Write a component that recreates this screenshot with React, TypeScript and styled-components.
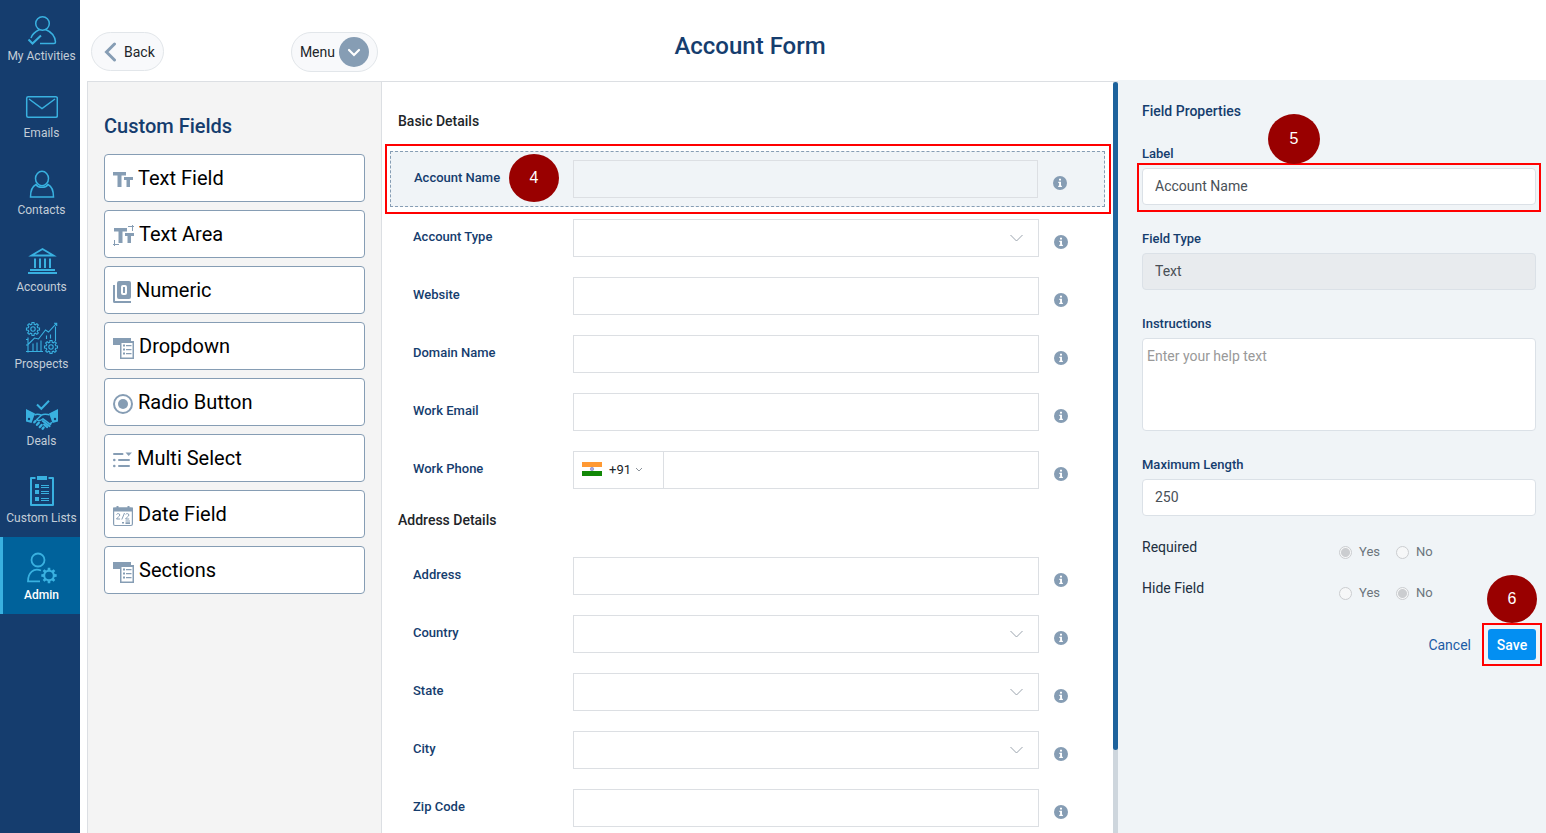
import React from "react";
import styled, { createGlobalStyle, css } from "styled-components";

const color = {
  navy: "#153d6e",
  active: "#00629b",
  cyan: "#39b1e0",
  slate: "#869db4",
  line: "#dcdfe3",
  pane: "#f0f4f7",
  red: "#ff0000",
  maroon: "#990000",
};

const GlobalStyle = createGlobalStyle`
  *, *::before, *::after { box-sizing: border-box; }
  body { margin: 0; overflow: hidden; background: #fff; }
  body, button, input, select, textarea { font-family: Roboto, "Liberation Sans", sans-serif; }
`;

const Page = styled.div`
  display: flex;
  height: 100vh;
  overflow: hidden;
`;

/* ---------- sidebar ---------- */

const Sidebar = styled.nav`
  flex: 0 0 80px;
  background: ${color.navy};
  overflow: hidden;
`;

const NavList = styled.ul`
  list-style: none;
  margin: -2px 0 0;
  padding: 0;
`;

const NavLink = styled.a<{ $active?: boolean }>`
  display: flex;
  flex-direction: column;
  align-items: center;
  justify-content: flex-end;
  gap: 2px;
  height: 77px;
  padding: 0 0 11px 3px;
  font-size: 12px;
  line-height: 16px;
  white-space: nowrap;
  text-decoration: none;
  color: #c3cdd8;
  ${(p) =>
    p.$active &&
    css`
      padding-left: 0;
      border-left: 3px solid ${color.cyan};
      background: ${color.active};
      color: #fff;
      font-weight: 500;
    `}
`;

const NavIcon = styled.svg`
  width: 34px;
  height: 34px;
  margin-right: 1px;
  fill: none;
  stroke: ${color.cyan};
  stroke-width: 1.5;
`;

/* ---------- top bar ---------- */

const Main = styled.div`
  flex: 1;
  min-width: 0;
  display: flex;
  flex-direction: column;
  padding-left: 7px;
`;

const TopBar = styled.header`
  flex: 0 0 81px;
  display: grid;
  grid-template-columns: 295px minmax(0, 1fr) 428px;
`;

const TopActions = styled.div`
  display: flex;
  align-items: flex-start;
  justify-content: space-between;
  padding: 32px 4px 0;
`;

const PillButton = styled.button`
  display: flex;
  align-items: center;
  gap: 6px;
  height: 39px;
  padding: 0 8px 0 12px;
  border: 1px solid #e2e6ea;
  border-radius: 20px;
  background: #f8f9fb;
  color: #212529;
  font-size: 14px;
`;

const MenuButton = styled(PillButton)`
  height: 40px;
  gap: 4px;
  padding: 0 8px;
`;

const Title = styled.h1`
  margin: 32px 0 0;
  text-align: center;
  font-size: 24px;
  line-height: 28px;
  font-weight: 500;
  color: ${color.navy};
`;

const Body = styled.div`
  flex: 1;
  min-height: 0;
  display: grid;
  grid-template-columns: 295px minmax(0, 1fr) 428px;
`;

/* ---------- custom fields ---------- */

const Palette = styled.section`
  border: 1px solid ${color.line};
  border-bottom: 0;
  background: #f4f4f4;
  padding: 32px 16px 0;
`;

const PaletteTitle = styled.h2`
  margin: 0 0 16px;
  font-size: 20px;
  line-height: 24px;
  font-weight: 500;
  color: ${color.navy};
`;

const PaletteList = styled.div`
  display: grid;
  gap: 8px;
`;

const PaletteItem = styled.button`
  display: flex;
  align-items: center;
  gap: 5px;
  height: 48px;
  padding: 0 8px;
  border: 1px solid ${color.slate};
  border-radius: 4px;
  background: #fff;
  color: #000;
  font-size: 20px;
  line-height: 24px;
`;

const PaletteIcon = styled.svg`
  height: 22px;
  margin-top: 4px;
  fill: ${color.slate};
  stroke: none;
`;

/* ---------- form ---------- */

const FormPane = styled.div`
  display: flex;
  min-height: 0;
  border-top: 1px solid ${color.line};
`;

const Form = styled.form`
  flex: 1;
  min-width: 0;
  overflow: hidden;
  padding: 29px 8px 0;
`;

const ScrollTrack = styled.div`
  flex: 0 0 5px;
  background: #ced6dd;
`;

const ScrollThumb = styled.div`
  height: 89%;
  border-radius: 3px;
  background: #1d629c;
`;

const SectionTitle = styled.h3`
  margin: 0 0 0 8px;
  font-size: 14px;
  line-height: 20px;
  font-weight: 500;
  color: #212529;
`;

const Rows = styled.div<{ $top: number }>`
  display: grid;
  gap: 20px;
  margin: ${(p) => p.$top}px 0 21px;
`;

const Row = styled.div<{ $selected?: boolean }>`
  position: relative;
  display: grid;
  grid-template-columns: 160px minmax(0, 1fr) 14px;
  align-items: center;
  padding: 0 37px 0 23px;
  ${(p) =>
    p.$selected &&
    css`
      grid-template-columns: 159px minmax(0, 1fr) 14px;
      margin-bottom: -8px;
      padding: 8px 37px 8px 23px;
      border: 1px dashed ${color.slate};
      background: ${color.pane};
    `}
`;

const RowLabel = styled.label`
  margin-bottom: 2px;
  font-size: 13px;
  line-height: 16px;
  font-weight: 500;
  color: ${color.navy};
`;

const Control = styled.div`
  position: relative;
  display: flex;
  margin-right: 15px;
`;

const controlBox = css`
  width: 100%;
  min-width: 0;
  height: 38px;
  border: 1px solid ${color.line};
  border-radius: 0;
  background: transparent;
  color: #495057;
  font-size: 14px;
  outline: 0;
`;

const RowInput = styled.input`
  ${controlBox}
  padding: 0 12px;
`;

const RowSelect = styled.select`
  ${controlBox}
  appearance: none;
  padding: 0 32px 0 12px;
`;

const SelectArrow = styled.svg`
  position: absolute;
  right: 16px;
  top: 15px;
  width: 13px;
  height: 8px;
  fill: none;
  stroke: #9aa3ad;
  pointer-events: none;
`;

const DialCode = styled.button`
  flex: 0 0 91px;
  display: flex;
  align-items: center;
  height: 38px;
  margin-right: -1px;
  padding: 0 8px 2px;
  border: 1px solid ${color.line};
  background: #fff;
  color: #212529;
  font-size: 13px;

  span {
    margin: 0 4px 0 7px;
  }
`;

const DialArrow = styled.svg`
  width: 8px;
  height: 6px;
  margin-top: 2px;
  fill: none;
  stroke: #8a929a;
`;

const InfoIcon = styled.svg`
  width: 14px;
  height: 14px;
  margin-top: 8px;
`;

/* ---------- properties ---------- */

const Properties = styled.aside`
  margin-top: -1px;
  background: ${color.pane};
  padding: 21px 10px 0 24px;
`;

const PropTitle = styled.h2`
  margin: 0 0 25px;
  font-size: 14px;
  line-height: 20px;
  font-weight: 500;
  color: ${color.navy};
`;

const PropField = styled.div`
  position: relative;
  display: grid;
  gap: 6px;
  margin-bottom: 26px;
`;

const PropLabel = styled.label`
  font-size: 13px;
  line-height: 16px;
  font-weight: 500;
  color: ${color.navy};
`;

const PropInput = styled.input`
  width: 100%;
  height: 37px;
  padding: 0 12px 2px;
  border: 1px solid #dbe1e7;
  border-radius: 4px;
  background: #fff;
  color: #495057;
  font-size: 14px;
  outline: 0;

  &:disabled {
    background: #e8ebee;
  }
`;

const PropTextarea = styled.textarea`
  display: block;
  width: 100%;
  height: 93px;
  padding: 7px 4px;
  border: 1px solid #dbe1e7;
  border-radius: 4px;
  background: #fff;
  color: #495057;
  font-size: 14px;
  line-height: 20px;
  resize: none;
  outline: 0;

  &::placeholder {
    color: #999;
  }
`;

const Choices = styled.div`
  margin-top: -5px;
`;

const Choice = styled.fieldset`
  display: flex;
  align-items: flex-start;
  height: 41px;
  margin: 0;
  padding: 0;
  border: 0;
`;

const ChoiceLegend = styled.span`
  flex: 0 0 197px;
  font-size: 14px;
  line-height: 20px;
  color: #212f40;
`;

const ChoiceOption = styled.label`
  display: flex;
  align-items: center;
  gap: 7px;
  margin-right: 16px;
  padding-top: 6px;
  font-size: 13px;
  line-height: 18px;
  color: #6c757d;

  input {
    appearance: none;
    width: 13px;
    height: 13px;
    margin: 1px 0 0;
    border: 1px solid #cbcdd0;
    border-radius: 50%;
    background: #f6f7f8;
  }

  input:checked {
    background: radial-gradient(circle, #cbcdd0 0 4px, #f6f7f8 5px);
  }
`;

const Actions = styled.div`
  display: flex;
  justify-content: flex-end;
  align-items: center;
  gap: 17px;
  margin-top: 10px;
`;

const CancelButton = styled.button`
  padding: 0;
  border: 0;
  background: none;
  color: #1b5ba5;
  font-size: 14px;
`;

const SaveWrap = styled.div`
  position: relative;
`;

const SaveButton = styled.button`
  display: block;
  width: 48px;
  height: 31px;
  padding: 0;
  border: 0;
  border-radius: 3px;
  background: #038ff2;
  color: #fff;
  font-size: 14px;
  font-weight: 500;
`;

/* ---------- callouts ---------- */

const Frame = styled.div<{ $inset: string }>`
  position: absolute;
  inset: ${(p) => p.$inset};
  border: 2px solid ${color.red};
  pointer-events: none;
`;

const Step = styled.div<{ $left: string; $top: string; $w: number }>`
  position: absolute;
  left: ${(p) => p.$left};
  top: ${(p) => p.$top};
  display: grid;
  place-items: center;
  width: ${(p) => p.$w}px;
  height: ${(p) => p.$w - 2}px;
  border-radius: 50%;
  background: ${color.maroon};
  color: #fff;
  font-family: "Liberation Sans", sans-serif;
  font-size: 16px;
`;

/* ---------- drawings ---------- */

/** Outline of a cog centred on (cx, cy). */
function cog(cx: number, cy: number, outer: number, inner: number, teeth = 8) {
  const pts: string[] = [];
  const step = (Math.PI * 2) / teeth;
  for (let i = 0; i < teeth; i++) {
    const a = i * step;
    [
      [-0.32, inner],
      [-0.2, outer],
      [0.2, outer],
      [0.32, inner],
    ].forEach(([t, r]) => {
      pts.push(`${(cx + Math.cos(a + t * step) * r).toFixed(2)} ${(cy + Math.sin(a + t * step) * r).toFixed(2)}`);
    });
  }
  return `M${pts.join("L")}Z`;
}

const navItems: { label: string; art: React.ReactNode; active?: boolean }[] = [
  {
    label: "My Activities",
    art: (
      <g transform="translate(0 1)">
        <circle cx="18.500" cy="10.500" r="6.800" />
        <path d="M15.500 16.500c-3 1.500-7 3.500-8.500 8.500M21.500 16.500c5 2 9.500 5.500 10 12.500 0 1-.6 1.500-1.500 1.500H16" />
        <path d="M4.500 26.500l4 4L17 22.500" strokeWidth="2" />
      </g>
    ),
  },
  {
    label: "Emails",
    art: (
      <>
        <rect x="2.700" y="7.700" width="30.600" height="20.600" rx="1.500" />
        <path d="M5 10l13 9.500L31 10" />
      </>
    ),
  },
  {
    label: "Contacts",
    art: (
      <>
        <ellipse cx="18" cy="12.500" rx="6.500" ry="7.200" />
        <path d="M12 18.500C8 20.500 6.500 25 6.500 31h23c0-6-1.500-10.500-5.500-12.500-2.500 3.800-9.500 3.800-12 0z" />
      </>
    ),
  },
  {
    label: "Accounts",
    art: (
      <>
        <path d="M7.500 12.500L18.500 6l11 6.500z" strokeWidth="1.800" />
        <path d="M11 15.500v9.500M16 15.500v9.500M21 15.500v9.500M26 15.500v9.500" strokeWidth="2" />
        <path d="M6 27h25M4 30h29" strokeWidth="2" />
      </>
    ),
  },
  {
    label: "Prospects",
    art: (
      <g strokeWidth="1.100" transform="translate(.5 .5)">
        <path d={cog(8.5, 8.5, 6.6, 4.9)} />
        <circle cx="8.500" cy="8.500" r="2.200" />
        <path d={cog(26.5, 26.5, 6.6, 4.9)} />
        <circle cx="26.500" cy="26.500" r="2.200" />
        <path d="M3.500 17v15M1.500 19h2M1.500 24.500h2M1.500 31h17M3.500 24l6.500-6.500 4 1L21 9.500l3 2L32 2.800M29.500 2.800h2.700v2.700" />
        <path d="M8.500 31v-8M12.500 31v-9M16.500 31V20M22 18.500V15M26 18V14M31 20.500V6" />
      </g>
    ),
  },
  {
    label: "Deals",
    art: (
      <>
        <path d="M13 7.500l4.300 4.300L25 3.800" strokeWidth="2" />
        <g fill={color.cyan} stroke="none">
          <path d="M2 12l9 4.600-3.500 9.400L2 24.500zM34 12l-9 4.600 3.500 9.400 5.500-1.500z" />
        </g>
        <g strokeWidth="1.500" strokeLinejoin="round">
          <path d="M10.500 18c2.500-1.500 4.500-1 7 .2l-4.800 4.300c1.800 1.800 4.300 1 6.300-.7l8 6M17.500 18.200c2.500-1.800 4.500-1 8-.4M27.500 25l-1 2.500" />
        </g>
        <path
          d="M10.300 25.300l1.200-1.300M13 27.800l1.800-2M15.800 30l1.800-2M18.600 31.700l1-1.200"
          strokeWidth="2.400"
          strokeLinecap="round"
        />
        <path d="M18.800 24l6.800 5.200M20 27.500l3.200 2.600" strokeWidth="2" strokeLinecap="round" />
        <circle cx="5" cy="22" r="1.200" fill={color.navy} stroke="none" />
        <circle cx="31" cy="22" r="1.200" fill={color.navy} stroke="none" />
      </>
    ),
  },
  {
    label: "Custom Lists",
    art: (
      <g transform="translate(0 -1)">
        <path d="M11.500 5H7v27h22V5h-4.500" strokeWidth="2" strokeLinejoin="round" />
        <g fill={color.cyan} stroke="none">
          <path d="M13 3h10v4H13z" />
          <path d="M11 11h4v4h-4zM11 17h4v4h-4zM11 24h4v4h-4z" />
        </g>
        <path d="M17 12.500h8M17 14.500h8M17 18.500h8M17 20.500h8M17 25.500h8M17 27.500h8" strokeWidth="1" />
      </g>
    ),
  },
  {
    label: "Admin",
    active: true,
    art: (
      <>
        <circle cx="14" cy="9" r="6.500" strokeWidth="1.800" />
        <path d="M17 19.500C9.500 16.500 4 22 4 30.300H16" strokeWidth="1.800" />
        <path
          d={`${cog(25, 24.5, 7.8, 5.8)}M28.800 24.500a3.800 3.800 0 1 0-7.600 0a3.800 3.800 0 1 0 7.600 0z`}
          fill={color.cyan}
          fillRule="evenodd"
          stroke="none"
        />
      </>
    ),
  },
];

const bigT = "M0 3h13v3.500H8.500V18h-4V6.500H0z";
const smallT = "M11 8h9v3h-3v7h-3.500v-7H11z";
const listArt = (
  <>
    <path d="M0 1h18v3h3v18H7V8H0z" />
    <path d="M8.500 6h11v14.500h-11z" fill="#fff" />
    <path d="M10 7.500h2v2h-2zM13 8h5.500v1.300H13zM10 11.500h2v2h-2zM13 12h5.500v1.300H13zM10 15.500h2v2h-2zM13 16h5.500v1.300H13z" />
  </>
);

const paletteItems: { label: string; width: number; art: React.ReactNode }[] = [
  { label: "Text Field", width: 20, art: <path d={`${bigT}${smallT}`} /> },
  {
    label: "Text Area",
    width: 21,
    art: (
      <>
        <path d={`${bigT}${smallT}`} transform="translate(1 0)" />
        <path d="M15 1.500h6M19.500 0v6M6 19.500H0M1.500 15v6" fill="none" stroke={color.slate} />
      </>
    ),
  },
  {
    label: "Numeric",
    width: 18,
    art: (
      <>
        <path d="M6 0h10a2 2 0 0 1 2 2v14a2 2 0 0 1-2 2H6a2 2 0 0 1-2-2V2a2 2 0 0 1 2-2zM0 4h2v16h16v2H1.500A1.500 1.500 0 0 1 0 20.500z" />
        <rect x="9" y="5" width="4" height="8" rx="1" fill="none" stroke="#fff" strokeWidth="2" />
      </>
    ),
  },
  { label: "Dropdown", width: 21, art: listArt },
  {
    label: "Radio Button",
    width: 20,
    art: (
      <>
        <circle cx="10" cy="11" r="9" fill="none" stroke={color.slate} strokeWidth="2" />
        <circle cx="10" cy="11" r="5" />
      </>
    ),
  },
  {
    label: "Multi Select",
    width: 19,
    art: (
      <>
        <path d="M12.500 3.500H19L15.700 7z" />
        <path d="M1 5h8.500M6 11h10M6 17h10" stroke={color.slate} strokeWidth="2" strokeLinecap="round" />
        <circle cx="1.300" cy="11" r="1.300" />
        <circle cx="1.300" cy="17" r="1.300" />
      </>
    ),
  },
  {
    label: "Date Field",
    width: 20,
    art: (
      <>
        <rect x=".6" y="3" width="18.800" height="17.500" rx="1.500" fill="none" stroke={color.slate} strokeWidth="1.200" />
        <path d="M0 2.500h3.500V1h2v1.500h9V1h2v1.500H20V6.500H0z" />
        <path
          d="M3.500 9.500c.5-1.200 3.300-1.300 3.300.5 0 1.600-2.400 2-3.300 4h3.600M8.800 14.500L11.500 8M12.600 9.500c.5-1.200 3.300-1.300 3.300.5 0 1.600-2.400 2-3.300 4h3.600"
          fill="none"
          stroke={color.slate}
        />
        <path d="M9 17h2v1.500H9zM12.500 15.500H17v1h-4.500zM12.500 17.300H17v1.700h-4.500z" />
      </>
    ),
  },
  { label: "Sections", width: 21, art: listArt },
];

const Info = () => (
  <InfoIcon viewBox="0 0 14 14" role="img" aria-label="More information">
    <circle cx="7" cy="7" r="7" fill={color.slate} />
    <path d="M6 2.700h2v1.800H6zM5.300 5.700H8v4h.9v1.300H5.200V9.700h.9V7h-.8z" fill="#fff" />
  </InfoIcon>
);

const Flag = () => (
  <svg width="20" height="14" viewBox="0 0 20 14" aria-hidden="true">
    <path d="M0 0h20v5H0z" fill="#ff9933" />
    <path d="M0 5h20v4H0z" fill="#fff" />
    <path d="M0 9h20v5H0z" fill="#128807" />
    <circle cx="10" cy="7" r="1.700" fill="#a9a9dc" stroke="#7f7fc4" strokeWidth=".6" />
  </svg>
);

type Kind = "text" | "select" | "phone";

function FormRow({ label, kind = "text", selected }: { label: string; kind?: Kind; selected?: boolean }) {
  const id = label.toLowerCase().replace(/ /g, "-");
  return (
    <Row $selected={selected}>
      <RowLabel htmlFor={id}>{label}</RowLabel>
      <Control>
        {kind === "select" && (
          <>
            <RowSelect id={id} defaultValue="">
              <option value=""></option>
            </RowSelect>
            <SelectArrow viewBox="0 0 13 8">
              <path d="M.5 1l6 6 6-6" />
            </SelectArrow>
          </>
        )}
        {kind === "phone" && (
          <DialCode type="button">
            <Flag />
            <span>+91</span>
            <DialArrow viewBox="0 0 8 6">
              <path d="M1 1l3 3 3-3" />
            </DialArrow>
          </DialCode>
        )}
        {kind !== "select" && <RowInput id={id} type={kind === "phone" ? "tel" : "text"} />}
      </Control>
      <Info />
      {selected && (
        <>
          <Frame $inset="-8px -7px -8px -6px" />
          <Step $left="118px" $top="2px" $w={50}>
            4
          </Step>
        </>
      )}
    </Row>
  );
}

function YesNo({ legend, name, value }: { legend: string; name: string; value: "Yes" | "No" }) {
  return (
    <Choice role="radiogroup" aria-label={legend}>
      <ChoiceLegend>{legend}</ChoiceLegend>
      {["Yes", "No"].map((o) => (
        <ChoiceOption key={o}>
          <input type="radio" name={name} disabled defaultChecked={o === value} />
          {o}
        </ChoiceOption>
      ))}
    </Choice>
  );
}

export default function App() {
  return (
    <Page>
      <GlobalStyle />
      <Sidebar>
        <NavList>
          {navItems.map((n) => (
            <li key={n.label}>
              <NavLink href="#" $active={n.active}>
                <NavIcon viewBox="0 0 34 34">{n.art}</NavIcon>
                {n.label}
              </NavLink>
            </li>
          ))}
        </NavList>
      </Sidebar>
      <Main>
        <TopBar>
          <TopActions>
            <PillButton type="button">
              <svg width="14" height="20" viewBox="0 0 14 20" fill="none" stroke={color.slate} strokeWidth="3">
                <path d="M10.500 2L2.500 10l8 8" strokeLinecap="round" />
              </svg>
              Back
            </PillButton>
            <MenuButton type="button">
              Menu
              <svg width="30" height="30" viewBox="0 0 30 30" fill="none">
                <circle cx="15" cy="15" r="15" fill={color.slate} />
                <path d="M10 13l5 5 5-5" stroke="#fff" strokeWidth="2.200" strokeLinecap="round" />
              </svg>
            </MenuButton>
          </TopActions>
          <Title>Account Form</Title>
        </TopBar>
        <Body>
          <Palette>
            <PaletteTitle>Custom Fields</PaletteTitle>
            <PaletteList>
              {paletteItems.map((p) => (
                <PaletteItem key={p.label} type="button">
                  <PaletteIcon width={p.width} viewBox={`0 0 ${p.width} 22`}>
                    {p.art}
                  </PaletteIcon>
                  {p.label}
                </PaletteItem>
              ))}
            </PaletteList>
          </Palette>
          <FormPane>
            <Form>
              <SectionTitle>Basic Details</SectionTitle>
              <Rows $top={20}>
                <FormRow label="Account Name" selected />
                <FormRow label="Account Type" kind="select" />
                <FormRow label="Website" />
                <FormRow label="Domain Name" />
                <FormRow label="Work Email" />
                <FormRow label="Work Phone" kind="phone" />
              </Rows>
              <SectionTitle>Address Details</SectionTitle>
              <Rows $top={27}>
                <FormRow label="Address" />
                <FormRow label="Country" kind="select" />
                <FormRow label="State" kind="select" />
                <FormRow label="City" kind="select" />
                <FormRow label="Zip Code" />
              </Rows>
            </Form>
            <ScrollTrack>
              <ScrollThumb />
            </ScrollTrack>
          </FormPane>
          <Properties>
            <PropTitle>Field Properties</PropTitle>
            <PropField>
              <PropLabel htmlFor="prop-label">Label</PropLabel>
              <PropInput id="prop-label" defaultValue="Account Name" />
              <Frame $inset="17px -5px -7px -5px" />
              <Step $left="126px" $top="-32px" $w={52}>
                5
              </Step>
            </PropField>
            <PropField>
              <PropLabel htmlFor="prop-type">Field Type</PropLabel>
              <PropInput id="prop-type" defaultValue="Text" disabled />
            </PropField>
            <PropField>
              <PropLabel htmlFor="prop-help">Instructions</PropLabel>
              <PropTextarea id="prop-help" placeholder="Enter your help text" />
            </PropField>
            <PropField>
              <PropLabel htmlFor="prop-max">Maximum Length</PropLabel>
              <PropInput id="prop-max" defaultValue="250" />
            </PropField>
            <Choices>
              <YesNo legend="Required" name="required" value="Yes" />
              <YesNo legend="Hide Field" name="hide" value="No" />
            </Choices>
            <Actions>
              <CancelButton type="button">Cancel</CancelButton>
              <SaveWrap>
                <SaveButton type="button">Save</SaveButton>
                <Frame $inset="-6px" />
                <Step $left="-1px" $top="-54px" $w={50}>
                  6
                </Step>
              </SaveWrap>
            </Actions>
          </Properties>
        </Body>
      </Main>
    </Page>
  );
}
